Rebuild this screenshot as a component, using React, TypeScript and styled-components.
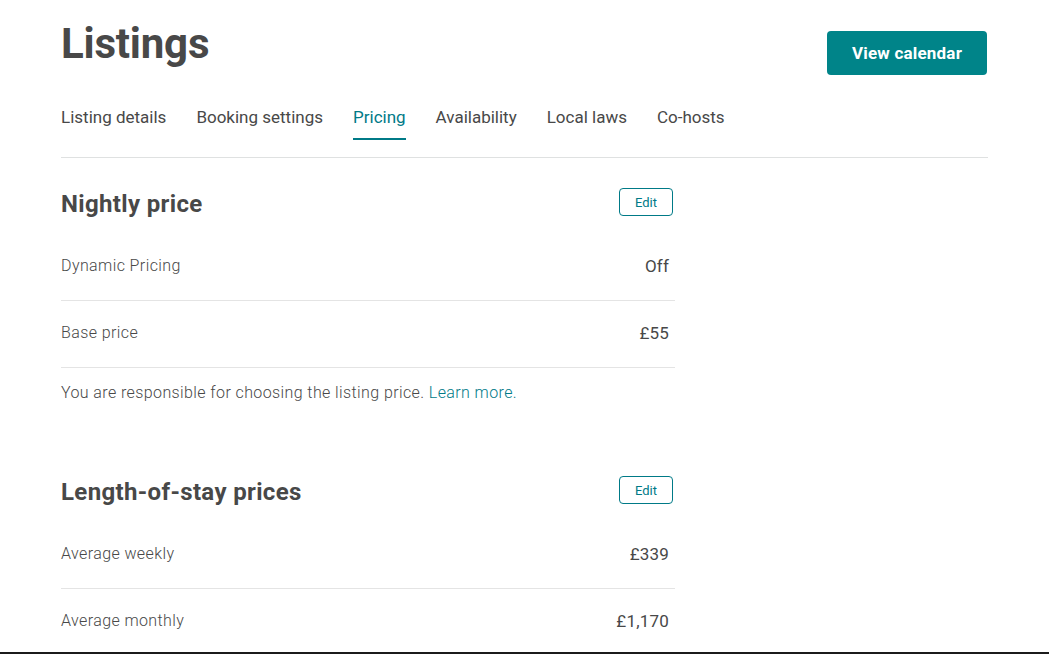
import styled, { createGlobalStyle } from 'styled-components'

type PriceRow = {
    label: string;
    value: string;
}

type PriceSection = {
    title: string;
    rows: PriceRow[];
    note?: boolean;
}

const GlobalStyle = createGlobalStyle`
    html, body {
        margin: 0;
        padding: 0;
        background: #ffffff;
    }
    body {
        font-family: Roboto, "Liberation Sans", Arial, sans-serif;
        color: #484848;
        -webkit-font-smoothing: antialiased;
    }
`;

const Page = styled.div`
    box-sizing: border-box;
    height: 654px;
    overflow: hidden;
    padding: 0 61px;
    border-bottom: 2px solid #1b1b1b;
`;

const Header = styled.header`
    display: flex;
    justify-content: space-between;
    align-items: flex-start;
    width: 927px;
`;

const Title = styled.h1`
    margin: 20px 0 0;
    font-size: 42px;
    line-height: 48px;
    font-weight: 700;
    letter-spacing: -0.2px;
    color: #484848;
`;

const PrimaryButton = styled.button`
    margin: 31px 1px 0 0;
    width: 160px;
    height: 44px;
    border: none;
    border-radius: 4px;
    background: #008489;
    color: #ffffff;
    font-family: inherit;
    font-size: 17px;
    font-weight: 700;
    letter-spacing: 0.2px;
    cursor: pointer;
`;

const Tabs = styled.nav`
    display: flex;
    gap: 30px;
    width: 927px;
    margin-top: 30px;
    padding-bottom: 17px;
    border-bottom: 1px solid #dfe1e1;
`;

const Tab = styled.a<{ $active?: boolean }>`
    display: block;
    padding-bottom: 9px;
    font-size: 17px;
    line-height: 24px;
    font-weight: 400;
    color: ${(props) => (props.$active ? '#007a87' : '#484848')};
    border-bottom: 2px solid ${(props) => (props.$active ? '#007a87' : 'transparent')};
    cursor: pointer;
`;

const Column = styled.div`
    width: 614px;
`;

const Section = styled.section<{ $first?: boolean }>`
    margin-top: ${(props) => (props.$first ? '30px' : '71px')};
`;

const SectionHead = styled.div`
    display: flex;
    justify-content: space-between;
    align-items: center;
    height: 28px;
    padding-right: 2px;
    margin-bottom: 18px;
`;

const SectionTitle = styled.h2`
    margin: 3px 0 0;
    font-size: 24px;
    line-height: 28px;
    font-weight: 700;
    letter-spacing: 0.35px;
    color: #484848;
`;

const EditButton = styled.button`
    box-sizing: border-box;
    width: 54px;
    height: 28px;
    border: 1px solid #007a87;
    border-radius: 4px;
    background: #ffffff;
    color: #007a87;
    font-family: inherit;
    font-size: 13px;
    cursor: pointer;
`;

const Row = styled.div`
    box-sizing: border-box;
    display: flex;
    justify-content: space-between;
    align-items: center;
    height: 67px;
    padding: 0 6px 3px 0;
    border-bottom: 1px solid #e4e4e4;
`;

const RowLabel = styled.span`
    font-size: 16px;
    font-weight: 300;
    letter-spacing: 0.4px;
    color: #484848;
`;

const RowValue = styled.span`
    font-size: 17px;
    font-weight: 400;
    letter-spacing: 0.2px;
    color: #484848;
`;

const Note = styled.p`
    margin: 13px 0 0;
    font-size: 16px;
    line-height: 24px;
    font-weight: 300;
    letter-spacing: 0.4px;
    color: #484848;
`;

const NoteLink = styled.a`
    color: #007a87;
    text-decoration: none;
    cursor: pointer;
`;

const tabs = ['Listing details', 'Booking settings', 'Pricing', 'Availability', 'Local laws', 'Co-hosts'];

const sections: PriceSection[] = [
    {
        title: 'Nightly price',
        rows: [
            { label: 'Dynamic Pricing', value: 'Off' },
            { label: 'Base price', value: '£55' },
        ],
        note: true,
    },
    {
        title: 'Length-of-stay prices',
        rows: [
            { label: 'Average weekly', value: '£339' },
            { label: 'Average monthly', value: '£1,170' },
        ],
    },
];

function App() {
    return (
        <>
            <GlobalStyle />
            <Page>
                <Header>
                    <Title>Listings</Title>
                    <PrimaryButton>View calendar</PrimaryButton>
                </Header>

                <Tabs>
                    {tabs.map((tab) => (
                        <Tab key={tab} $active={tab === 'Pricing'}>{tab}</Tab>
                    ))}
                </Tabs>

                <Column>
                    {sections.map((section, i) => (
                        <Section key={section.title} $first={i === 0}>
                            <SectionHead>
                                <SectionTitle>{section.title}</SectionTitle>
                                <EditButton>Edit</EditButton>
                            </SectionHead>

                            {section.rows.map((row) => (
                                <Row key={row.label}>
                                    <RowLabel>{row.label}</RowLabel>
                                    <RowValue>{row.value}</RowValue>
                                </Row>
                            ))}

                            {section.note && (
                                <Note>
                                    You are responsible for choosing the listing price. <NoteLink>Learn more.</NoteLink>
                                </Note>
                            )}
                        </Section>
                    ))}
                </Column>
            </Page>
        </>
    );
}

export default App;
